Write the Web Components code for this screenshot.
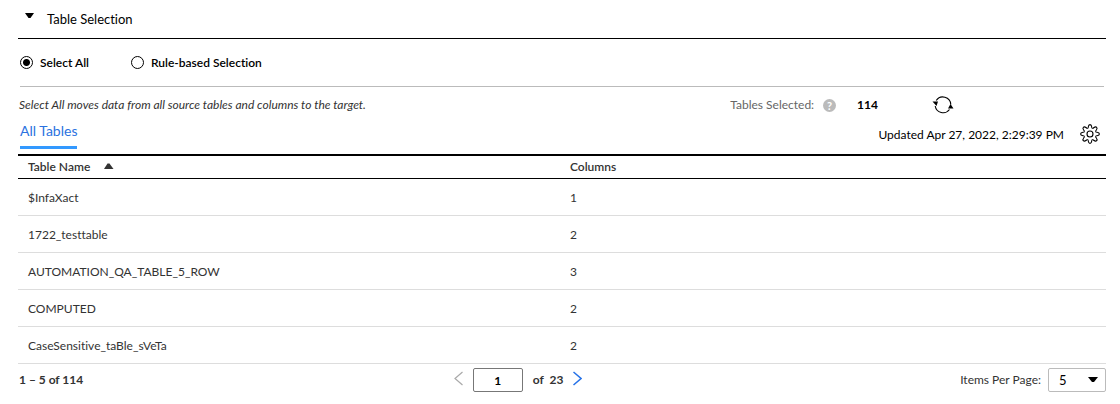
<!DOCTYPE html>
<html lang="en">
<head>
<meta charset="utf-8">
<title>Table Selection</title>
<style>
body { margin: 0; background: #fff; color: #000; font: 12px/16px Lato, "Liberation Sans", sans-serif; font-variant-ligatures: none; }
</style>
</head>
<body>
<selection-panel heading="Table Selection">
  <selection-mode></selection-mode>
  <selection-summary count="114">Select All moves data from all source tables and columns to the target.</selection-summary>
  <table-tabs updated="Updated Apr 27, 2022, 2:29:39 PM">All Tables</table-tabs>
  <source-table></source-table>
  <table-pager></table-pager>
</selection-panel>
<script>
class BaseElement extends HTMLElement {
  connectedCallback() {
    if (this.shadowRoot) return;
    this.attachShadow({ mode: "open" }).innerHTML =
      `<style>
        :host { display: block; box-sizing: border-box; }
        * { box-sizing: border-box; }
        svg { display: block; flex: none; }
        button { display: flex; align-items: center; margin: 0; padding: 0; border: 0; background: none; color: inherit; font: inherit; font-variant-ligatures: none; cursor: pointer; }
      </style>` + this.render();
  }
}

customElements.define("selection-panel", class extends BaseElement {
  render() {
    return `<style>
      :host { padding: 0 14px 0 18px; }
      h2 { margin: 0; font: inherit; border-bottom: 1px solid #000; }
      button { width: 100%; height: 38px; padding-left: 7px; gap: 12px; font-size: 13px; }
      svg { margin-bottom: 7px; }
    </style>
    <h2><button type="button" aria-expanded="true">
      <svg width="10" height="6" viewBox="0 0 10 6" aria-hidden="true"><path d="M0 0h9L5.500 5h-2z"/></svg>
      <span>${this.getAttribute("heading")}</span>
    </button></h2>
    <slot></slot>`;
  }
});

customElements.define("selection-mode", class extends BaseElement {
  render() {
    return `<style>
      :host { margin: 0 2px; border-bottom: 1px solid #bbb; }
      div { display: flex; height: 47px; align-items: center; gap: 42px; }
      label { display: flex; align-items: center; gap: 7px; font-weight: 600; }
      input { appearance: none; width: 13px; height: 13px; margin: 0; border: 1px solid #000; border-radius: 50%; background: #fff; }
      input:checked { background: radial-gradient(circle, #000 0 3px, #fff 4px); }
    </style>
    <div role="radiogroup" aria-label="Selection mode">
      <label><input type="radio" name="mode" checked>Select All</label>
      <label><input type="radio" name="mode">Rule-based Selection</label>
    </div>`;
  }
});

customElements.define("selection-summary", class extends BaseElement {
  render() {
    return `<style>
      :host { display: flex; height: 34px; padding: 2px 152px 0 1px; align-items: center; justify-content: space-between; }
      p { margin: 0; font-style: italic; color: #333; }
      .count { display: flex; align-items: center; color: #666; }
      .help { width: 13px; height: 13px; margin: 0 21px 0 9px; border-radius: 50%; background: #bbb; color: #fff; font-size: 11px; line-height: 13px; justify-content: center; font-weight: 700; }
      b { color: #000; margin-right: 54px; }
    </style>
    <p><slot></slot></p>
    <div class="count"><span>Tables Selected:</span>
      <button type="button" class="help" aria-label="Help">?</button>
      <b>${this.getAttribute("count")}</b>
      <button type="button" aria-label="Refresh">
        <svg width="22" height="18" viewBox="0 0 22 18" aria-hidden="true">
          <path d="M4.200 4.500A8 8 0 0 1 18.800 8.500M17.500 13.500A8 8 0 0 1 3.200 10" fill="none" stroke="#000" stroke-width="1.100"/>
          <path d="M.5 5.500h5.500L4.500 10zM18.500 8l3 4.500h-5.500z"/>
        </svg>
      </button>
    </div>`;
  }
});

customElements.define("table-tabs", class extends BaseElement {
  render() {
    let teeth = "";
    for (let i = 0; i < 8; i++) {
      teeth += `<path transform="rotate(${i * 45} 10 10)" d="M7.590 4.180C8.800 4.500 7.500 .6 10 .6C12.500 .6 11.200 4.500 12.410 4.180"/>`;
    }
    return `<style>
      :host { display: flex; height: 33px; align-items: flex-start; justify-content: space-between; padding: 0 6px 0 2px; }
      .tab { height: 28px; padding-bottom: 5px; border-bottom: 3px solid #39f; color: #2b72e0; font-size: 14px; }
      .tools { display: flex; align-items: center; gap: 16px; height: 26px; }
      .tools span { padding-top: 2px; }
    </style>
    <button type="button" class="tab" role="tab" aria-selected="true"><slot></slot></button>
    <div class="tools"><span>${this.getAttribute("updated")}</span>
      <button type="button" aria-label="Settings">
        <svg width="20" height="20" viewBox="0 0 20 20" fill="none" stroke="#000" stroke-width="1.100" stroke-linejoin="round" aria-hidden="true">${teeth}<circle cx="10" cy="10" r="3"/></svg>
      </button>
    </div>`;
  }
});

customElements.define("source-table", class extends BaseElement {
  render() {
    const rows = [["$InfaXact", 1], ["1722_testtable", 2], ["AUTOMATION_QA_TABLE_5_ROW", 3], ["COMPUTED", 2], ["CaseSensitive_taBle_sVeTa", 2]];
    return `<style>
      :host { color: #333; }
      table { width: 100%; table-layout: fixed; border-spacing: 0; border-top: 2px solid #000; }
      th, td { padding: 0 8px; text-align: left; }
      :is(th, td):first-child { padding-left: 10px; }
      th { height: 23px; border-bottom: 1px solid #000; font-weight: 600; }
      td { height: 37px; padding-top: 2px; border-bottom: 1px solid #ddd; }
      button { gap: 14px; }
    </style>
    <table>
      <thead><tr><th aria-sort="ascending"><button type="button">Table Name
        <svg width="10" height="9" viewBox="0 0 10 9" fill="#333" aria-hidden="true"><path d="M0 6l3.500-5.500h2L9.500 6z"/></svg>
      </button></th><th>Columns</th></tr></thead>
      <tbody>${rows.map(([name, n]) => `<tr><td>${name}</td><td>${n}</td></tr>`).join("")}</tbody>
    </table>`;
  }
});

customElements.define("table-pager", class extends BaseElement {
  render() {
    return `<style>
      :host { display: grid; grid-template-columns: 40% auto 1fr; align-items: center; padding: 4px 0 0 1px; color: #333; }
      b { font-weight: 700; }
      .pages, .size { display: flex; align-items: center; }
      .pages { gap: 10px; }
      .pages b { white-space: pre; }
      input, select { height: 24px; border-radius: 2px; background: #fff; color: #000; font: inherit; }
      input { width: 50px; padding: 0; border: 1px solid #777; text-align: center; font-weight: 700; }
      .size { justify-self: end; gap: 7px; }
      .pick { position: relative; }
      select { display: block; appearance: none; width: 58px; padding: 0 10px; border: 1px solid #bbb; font-size: 13px; }
      .pick svg { position: absolute; right: 8px; top: 9px; pointer-events: none; }
    </style>
    <b>1 – 5 of 114</b>
    <div class="pages">
      <button type="button" aria-label="Previous page" disabled><svg width="9" height="18" viewBox="0 0 9 18" fill="none" stroke="#aaa" stroke-width="1.200" aria-hidden="true"><path d="M8.500 1L1 7.500 8.500 14"/></svg></button>
      <input type="text" value="1" aria-label="Page">
      <b>of  23</b>
      <button type="button" aria-label="Next page"><svg width="9" height="18" viewBox="0 0 9 18" fill="none" stroke="#2672e8" stroke-width="1.500" aria-hidden="true"><path d="M.5 1L8 7.500.5 14"/></svg></button>
    </div>
    <div class="size"><label for="size">Items Per Page:</label>
      <span class="pick"><select id="size"><option>5</option><option>10</option><option>25</option></select>
      <svg width="10" height="6" viewBox="0 0 10 6" aria-hidden="true"><path d="M0 0h10L6 5H4z"/></svg></span>
    </div>`;
  }
});
</script>
</body>
</html>
